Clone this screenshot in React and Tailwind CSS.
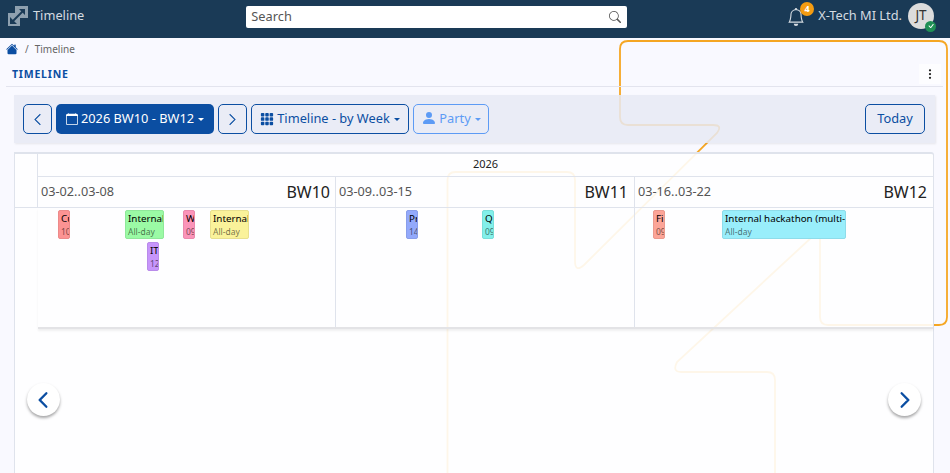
import React from "react";
import { BsHouseFill, BsCalendar, BsGrid3X3GapFill, BsPersonFill, BsBell, BsSearch, BsChevronLeft, BsChevronRight, BsThreeDotsVertical, BsCheck } from "react-icons/bs";

const Caret = () => (
  <span className="ml-[4px] inline-block w-0 h-0 border-x-[3px] border-x-transparent border-t-[3px] border-t-current" />
);

const Logo = () => (
  <svg width="20" height="20" viewBox="0 0 20 20">
    <rect x="7" y="0" width="13" height="12" fill="#8ea0af" />
    <rect x="0" y="7" width="12" height="13" fill="#8ea0af" />
    <path d="M3 17 L16 4" stroke="#1a3a56" strokeWidth="2" />
    <path d="M11 3 H17 V9 Z M2 11 V18 H9 Z" fill="#1a3a56" />
  </svg>
);

const events = [
  { l: 58, t: 210, w: 12, name: "Cu", sub: "10", bg: "bg-[#fc9393]", bd: "border-[#ec8a8a]" },
  { l: 125, t: 210, w: 39, name: "Internal", sub: "All-day", bg: "bg-[#9bfaa5]", bd: "border-[#8fe89a]" },
  { l: 183, t: 210, w: 12, name: "W", sub: "09", bg: "bg-[#fb94b9]", bd: "border-[#ea8aad]" },
  { l: 210, t: 210, w: 39, name: "Internal", sub: "All-day", bg: "bg-[#faf29a]", bd: "border-[#e8e08e]" },
  { l: 147, t: 242, w: 12, name: "IT", sub: "12", bg: "bg-[#c795fb]", bd: "border-[#b98bea]" },
  { l: 406, t: 210, w: 12, name: "Pr", sub: "14", bg: "bg-[#93a9fb]", bd: "border-[#899eea]" },
  { l: 482, t: 210, w: 12, name: "Qu", sub: "09", bg: "bg-[#82f0ea]", bd: "border-[#79dfd9]" },
  { l: 653, t: 210, w: 12, name: "Fi", sub: "09", bg: "bg-[#fca598]", bd: "border-[#eb9a8e]" },
  { l: 722, t: 210, w: 124, name: "Internal hackathon (multi-day)", sub: "All-day", bg: "bg-[#99eefb]", bd: "border-[#8edcea]" },
];

const weeks = [
  { range: "03-02..03-08", bw: "BW10", w: "w-[298px] pr-[5px] border-r border-[#dfe3ec]" },
  { range: "03-09..03-15", bw: "BW11", w: "w-[299px] pr-[6px] border-r border-[#dfe3ec]" },
  { range: "03-16..03-22", bw: "BW12", w: "flex-1 pr-[6px]" },
];

const btn = "h-[30px] rounded-[5px] border border-[#0b4ea2] flex items-center justify-center text-[12.8px] text-[#0b4ea2]";

export default function App() {
  return (
    <div className="relative h-[473px] w-[950px] overflow-hidden bg-[#f9f9ff] font-['Noto_Sans','Open_Sans',sans-serif]">
      <svg className="absolute inset-0" width="950" height="473" viewBox="0 0 950 473" fill="none">
        <path
          d="M447.5 473 V180 q0 -8 8 -8 H567 q8 0 8 8 V261 q0 12 9 4 L717 133 q6 -8 -4 -8 H628 q-8 0 -8 -8 V49 q0 -8 8 -8 H939 q8 0 8 8 V317 q0 8 -8 8 H828 q-8 0 -8 -8 V240 q0 -10 -8 -3 L677 362 q-5 10 4 10 H767 q8 0 8 8 V473"
          stroke="#f5a623"
          strokeWidth="1.8"
        />
      </svg>

      <div className="relative flex flex-col h-full">
        <header className="h-[38px] shrink-0 bg-[#1a3a56] flex items-center pr-[16px]">
          <div className="ml-[8px] w-[20px] mb-[6px]"><Logo /></div>
          <span className="ml-[5px] mb-[7px] text-[12.8px] text-[#d5dbe1]">Timeline</span>
          <div className="ml-[162px] mt-[-5px] w-[381px] h-[22px] rounded-[2px] bg-white flex items-center justify-between pl-[5px] pr-[6px]">
            <span className="text-[12.8px] text-[#555]">Search</span>
            <BsSearch className="text-[#555]" size={12} />
          </div>
          <div className="relative ml-auto mb-[5px]">
            <BsBell className="text-[#d5dbe1]" size={18} />
            <span className="absolute -top-[6px] left-[13px] w-[14px] h-[14px] rounded-full bg-[#f59c11] text-white text-[9px] font-bold flex items-center justify-center">4</span>
          </div>
          <span className="ml-[13px] mb-[7px] whitespace-nowrap text-[12.8px] text-[#d5dbe1]">X-Tech MI Ltd.</span>
          <div className="relative ml-[6px] mb-[7px] w-[26px] h-[26px] rounded-full bg-[#dcdcdc] text-[#333] text-[13.5px] flex items-center justify-center">
            JT
            <span className="absolute -bottom-[3px] -right-[2px] w-[11px] h-[11px] rounded-full bg-[#1f8f55] flex items-center justify-center text-white">
              <BsCheck size={10} />
            </span>
          </div>
        </header>

        <nav className="h-[22px] shrink-0 flex items-center pl-[6px] text-[10px] text-[#666]">
          <BsHouseFill className="text-[#0b4ea2]" size={12} />
          <span className="ml-[7px]">/</span>
          <span className="ml-[6px]">Timeline</span>
        </nav>

        <div className="ml-[6px] mr-[7px] h-[27px] shrink-0 border-b border-[#e3e4ee] flex items-center justify-between pl-[6px] pr-[2px]">
          <span className="mt-[3px] text-[10.5px] font-bold tracking-[0.8px] text-[#0b4ea2]">TIMELINE</span>
          <span className="mt-[2px] w-[22px] h-[20px] bg-[#fdfdff] flex items-center justify-center text-[#222]">
            <BsThreeDotsVertical size={12} />
          </span>
        </div>

        <div className="mt-[8px] ml-[14px] w-[921px] h-[48px] shrink-0 bg-[#e7eaf4]/85 shadow-[1px_1px_2px_rgba(0,0,0,0.08)] flex items-center pl-[9px] pr-[10px]">
          <button className={btn + " w-[29px]"}><BsChevronLeft size={13} strokeWidth={0.6} /></button>
          <button className="ml-[4px] w-[158px] h-[30px] rounded-[5px] bg-[#0b4ea2] text-white text-[12.8px] flex items-center justify-center">
            <BsCalendar size={12} className="mr-[3px]" />2026 BW10 - BW12<Caret />
          </button>
          <button className={btn + " ml-[4px] w-[29px]"}><BsChevronRight size={13} strokeWidth={0.6} /></button>
          <button className={btn + " ml-[4px] w-[158px]"}>
            <BsGrid3X3GapFill size={14} className="mr-[3px]" />Timeline - by Week<Caret />
          </button>
          <button className="ml-[4px] w-[76px] h-[30px] rounded-[5px] border border-[#5d9bf5] text-[#5d9bf5] text-[12.8px] flex items-center justify-center">
            <BsPersonFill size={16} className="mr-[2px] -mt-[2px]" />Party<Caret />
          </button>
          <button className={btn + " ml-auto w-[60px]"}>Today</button>
        </div>

        <div className="relative mt-[9px] ml-[14px] w-[920px] flex-1 bg-white/90 border-x border-t-[2px] border-[#dfe3ec] rounded-tr-[3px]">
          <div className="flex h-[23px]">
            <div className="w-[23px] border-r border-[#dfe3ec]" />
            <div className="flex-1 border-b border-[#dfe3ec] flex items-center justify-center pb-[2px] text-[11px] text-[#222]">2026</div>
          </div>
          <div className="flex h-[31px] border-b border-[#dfe3ec]">
            <div className="w-[23px] shrink-0 border-r border-[#dfe3ec]" />
            {weeks.map((w) => (
              <div key={w.bw} className={w.w + " flex items-center justify-between pl-[3px]"}>
                <span className="text-[12.7px] text-[#555]">{w.range}</span>
                <span className="text-[16px] text-[#222]">{w.bw}</span>
              </div>
            ))}
          </div>
          <div className="flex h-[121px] ml-[23px] border-b-[2px] border-[#e3e3e6] shadow-[0_2px_2px_rgba(0,0,0,0.06)]">
            <div className="w-[298px] border-r border-[#dfe3ec]" />
            <div className="w-[299px] border-r border-[#dfe3ec]" />
            <div className="flex-1" />
          </div>

          {events.map((e, i) => (
            <div
              key={i}
              style={{ left: e.l - 15, top: e.t - 154, width: e.w }}
              className={"absolute h-[29px] overflow-hidden whitespace-nowrap rounded-[2px] border pl-[2px] " + e.bg + " " + e.bd}
            >
              <div className="text-[9.8px] leading-[13px] mt-[1px] text-black">{e.name}</div>
              <div className="text-[8.5px] leading-[12px] mt-[1px] text-black/55">{e.sub}</div>
            </div>
          ))}

          <button className="absolute left-[12px] top-[229px] w-[33px] h-[33px] rounded-full bg-white shadow-[0_2px_3px_rgba(0,0,0,0.35)] flex items-center justify-center text-[#0b4ea2]">
            <BsChevronLeft size={18} strokeWidth={1} className="-ml-[1px]" />
          </button>
          <button className="absolute left-[873px] top-[229px] w-[33px] h-[33px] rounded-full bg-white shadow-[0_2px_3px_rgba(0,0,0,0.35)] flex items-center justify-center text-[#0b4ea2]">
            <BsChevronRight size={18} strokeWidth={1} className="ml-[1px]" />
          </button>
        </div>
      </div>
    </div>
  );
}
